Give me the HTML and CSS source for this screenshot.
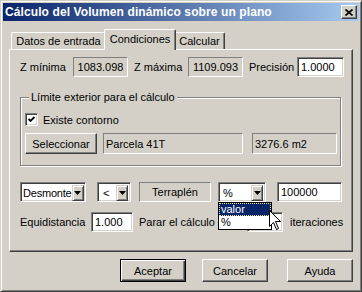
FILE: index.html
```html
<!DOCTYPE html>
<html lang="es">
<head>
  <meta charset="UTF-8" />
  <title>Cálculo del Volumen dinámico sobre un plano</title>
  <link rel="stylesheet" href="styles.css">
</head>
<body>
  <div class="window">
    <div class="titlebar">
      <span class="title">Cálculo del Volumen dinámico sobre un plano</span>
      <div class="close">
        <svg width="8" height="7" viewBox="0 0 8 7"><path d="M0.5 0.5 L7.5 6.5 M7.5 0.5 L0.5 6.5" stroke="#000" stroke-width="1.7" fill="none"/></svg>
      </div>
    </div>

    <div class="tabs">
      <div class="tab tab-datos">Datos de entrada</div>
      <div class="tab tab-cond active">Condiciones</div>
      <div class="tab tab-calc">Calcular</div>
    </div>

    <div class="panel">
      <div class="row row-z">
        <span class="label w-zmin">Z mínima</span>
        <div class="static w-zval">1083.098</div>
        <span class="label w-zmax">Z máxima</span>
        <div class="static w-zval">1109.093</div>
        <span class="label w-prec">Precisión</span>
        <div class="field w-prec-in">1.0000</div>
      </div>

      <div class="group">
        <div class="group-title">Límite exterior para el cálculo</div>
        <div class="check">
          <span class="checkbox">
            <svg width="7" height="7" viewBox="0 0 7 7"><path d="M0.5 3 L2.5 5 L6.5 1" stroke="#000" stroke-width="1.8" fill="none"/></svg>
          </span>
          Existe contorno
        </div>
        <div class="row row-sel">
          <div class="btn w-sel">Seleccionar</div>
          <div class="static left w-parcela">Parcela 41T</div>
          <div class="static left w-area">3276.6 m2</div>
        </div>
      </div>

      <div class="row row-cond">
        <div class="combo w-desmonte">
          <span class="combo-text">Desmonte</span>
          <span class="combo-arrow"><svg width="7" height="4" viewBox="0 0 7 4"><polygon points="0,0 7,0 3.5,4" fill="#000"/></svg></span>
        </div>
        <div class="combo w-op">
          <span class="combo-text">&lt;</span>
          <span class="combo-arrow"><svg width="7" height="4" viewBox="0 0 7 4"><polygon points="0,0 7,0 3.5,4" fill="#000"/></svg></span>
        </div>
        <div class="static w-terraplen">Terraplén</div>
        <div class="combo w-unit open">
          <span class="combo-text">%</span>
          <span class="combo-arrow"><svg width="7" height="4" viewBox="0 0 7 4"><polygon points="0,0 7,0 3.5,4" fill="#000"/></svg></span>
          <ul class="dropdown">
            <li class="selected">valor</li>
            <li>%</li>
          </ul>
          <svg class="cursor" width="13" height="21" viewBox="0 0 13 21"><path d="M0.5 0.5 L0.5 16.5 L4.5 12.5 L7.5 19.5 L9.5 18.5 L6.5 11.5 L11.5 11.5 Z" fill="#fff" stroke="#000" stroke-width="1"/></svg>
        </div>
        <div class="field w-limit">100000</div>
      </div>

      <div class="row row-eq">
        <span class="label w-equi">Equidistancia</span>
        <div class="field w-equi-in">1.000</div>
        <span class="label w-parar">Parar el cálculo en</span>
        <div class="field w-iter"></div>
        <span class="label w-iterlbl">iteraciones</span>
      </div>
    </div>

    <div class="buttons">
      <div class="btn default">Aceptar</div>
      <div class="btn cancel">Cancelar</div>
      <div class="btn help">Ayuda</div>
    </div>
  </div>
</body>
</html>
```

FILE: styles.css
```css
* {
  margin: 0;
  padding: 0;
  box-sizing: border-box;
}

body {
  background: #d4d0c8;
  font-family: "Liberation Sans", Arial, sans-serif;
  font-size: 11px;
  color: #000;
}

.window {
  width: 362px;
  height: 292px;
  padding: 2px;
  border: 1px solid;
  border-color: #d4d0c8 #404040 #404040 #d4d0c8;
  box-shadow: inset 1px 1px #fff, inset -1px -1px #808080;
  background: #d4d0c8;
  display: flex;
  flex-direction: column;
}

.titlebar {
  height: 18px;
  display: flex;
  align-items: center;
  justify-content: space-between;
  padding: 0 2px;
  background: linear-gradient(to right, #0a246a, #a6caf0);
  color: #fff;
  font-weight: bold;
}

.title {
  font-size: 12px;
  letter-spacing: 0.1px;
  line-height: 18px;
  white-space: nowrap;
}

.close {
  width: 16px;
  height: 14px;
  background: #d4d0c8;
  border: 1px solid;
  border-color: #fff #404040 #404040 #fff;
  box-shadow: inset -1px -1px #808080;
  display: flex;
  align-items: center;
  justify-content: center;
  padding-right: 1px;
}

/* tabs */
.tabs {
  margin-top: 8px;
  height: 20px;
  display: flex;
  align-items: flex-end;
  padding-left: 8px;
}

.tab {
  height: 17px;
  display: flex;
  align-items: center;
  justify-content: center;
  border-left: 1px solid #fff;
  border-top: 1px solid #fff;
  border-right: 1px solid #404040;
  border-radius: 2px 2px 0 0;
  box-shadow: inset -1px 0 #808080;
  white-space: nowrap;
}

.tab-datos { width: 95px; }
.tab-calc { width: 51px; }

.tab.active {
  width: 72px;
  height: 21px;
  margin: 0 -2px -1px;
  padding-bottom: 3px;
  position: relative;
  z-index: 1;
  background: #d4d0c8;
}

.panel {
  margin-left: 6px;
  width: 344px;
  height: 203px;
  border: 1px solid;
  border-color: #fff #404040 #404040 #fff;
  box-shadow: inset -1px -1px #808080;
  padding: 7px 0 0 10px;
}

/* rows */
.row {
  display: flex;
  align-items: center;
  height: 20px;
}

.label {
  white-space: nowrap;
}

.w-zmin { width: 53px; }
.w-zval { width: 55px; }
.w-zmax { width: 54px; margin-left: 6px; }
.w-prec { width: 48px; margin-left: 6px; }
.w-prec-in { width: 47px; }

.static {
  height: 20px;
  border: 1px solid;
  border-color: #808080 #fff #fff #808080;
  display: flex;
  align-items: center;
  justify-content: center;
}

.static.left {
  justify-content: flex-start;
  padding-left: 2px;
}

.field {
  height: 20px;
  background: #fff;
  border: 1px solid;
  border-color: #808080 #fff #fff #808080;
  box-shadow: inset 1px 1px #404040, inset -1px -1px #d4d0c8;
  padding-left: 3px;
  display: flex;
  align-items: center;
}

/* group box */
.group {
  margin-top: 20px;
  width: 321px;
  height: 69px;
  border: 1px solid #808080;
  box-shadow: 1px 1px #fff, inset 1px 1px #fff;
  padding-left: 4px;
}

.group-title {
  width: max-content;
  margin: -7px 0 0 4px;
  padding: 0 2px;
  line-height: 13px;
  background: #d4d0c8;
}

.check {
  display: flex;
  align-items: center;
  gap: 5px;
  margin-top: 9px;
  height: 13px;
}

.checkbox {
  width: 13px;
  height: 13px;
  background: #fff;
  border: 1px solid;
  border-color: #808080 #fff #fff #808080;
  box-shadow: inset 1px 1px #404040, inset -1px -1px #d4d0c8;
  display: flex;
  align-items: center;
  justify-content: center;
}

.row-sel {
  margin-top: 7px;
  height: 21px;
}

.row-sel .btn,
.row-sel .static {
  height: 21px;
}

.w-sel { width: 72px; }
.w-parcela { width: 140px; margin-left: 6px; }
.w-area { width: 85px; margin-left: 9px; }

.btn {
  height: 23px;
  border: 1px solid;
  border-color: #fff #404040 #404040 #fff;
  box-shadow: inset -1px -1px #808080;
  display: flex;
  align-items: center;
  justify-content: center;
  white-space: nowrap;
}

/* conditions row */
.row-cond {
  margin-top: 16px;
}

.combo {
  position: relative;
  height: 20px;
  background: #fff;
  border: 1px solid;
  border-color: #808080 #fff #fff #808080;
  box-shadow: inset 1px 1px #404040, inset -1px -1px #d4d0c8;
  padding: 2px;
  display: flex;
}

.combo-text {
  flex: 1;
  line-height: 16px;
  letter-spacing: -0.2px;
  white-space: nowrap;
}

.combo-arrow {
  width: 12px;
  height: 16px;
  flex: none;
  background: #d4d0c8;
  border: 1px solid;
  border-color: #d4d0c8 #404040 #404040 #d4d0c8;
  box-shadow: inset 1px 1px #fff, inset -1px -1px #808080;
  display: flex;
  align-items: center;
  justify-content: center;
}

.w-desmonte { width: 66px; }
.w-op { width: 34px; margin-left: 11px; }
.w-op .combo-text { padding-left: 3px; }
.w-terraplen { width: 72px; margin-left: 8px; }
.w-unit { width: 48px; margin-left: 7px; }
.w-unit .combo-text { padding-left: 2px; }
.w-limit { width: 65px; margin-left: 11px; }

.dropdown {
  position: absolute;
  top: 19px;
  left: -1px;
  width: 54px;
  background: #fff;
  border: 1px solid #000;
  list-style: none;
  z-index: 2;
}

.dropdown li {
  height: 13px;
  line-height: 13px;
  padding-left: 2px;
}

.dropdown li.selected {
  background: #0a246a;
  color: #fff;
  outline: 1px dotted #e8e090;
  outline-offset: -1px;
}

.cursor {
  position: absolute;
  left: 50px;
  top: 27px;
  z-index: 3;
}

/* equidistance row */
.row-eq {
  margin-top: 10px;
}

.w-equi { width: 71px; }
.w-equi-in { width: 42px; }
.w-parar { width: 108px; margin-left: 6px; overflow: hidden; }
.w-iter { width: 36px; }
.w-iterlbl { margin-left: 7px; }

/* dialog buttons */
.buttons {
  display: flex;
  justify-content: flex-end;
  margin-top: 7px;
  padding-right: 6px;
}

.buttons .btn {
  width: 66px;
}

.buttons .cancel { margin-left: 16px; }
.buttons .help { margin-left: 19px; }

.btn.default {
  border: 1px solid #000;
  box-shadow: inset 1px 1px #fff, inset -1px -1px #404040, inset -2px -2px #808080;
}
```
